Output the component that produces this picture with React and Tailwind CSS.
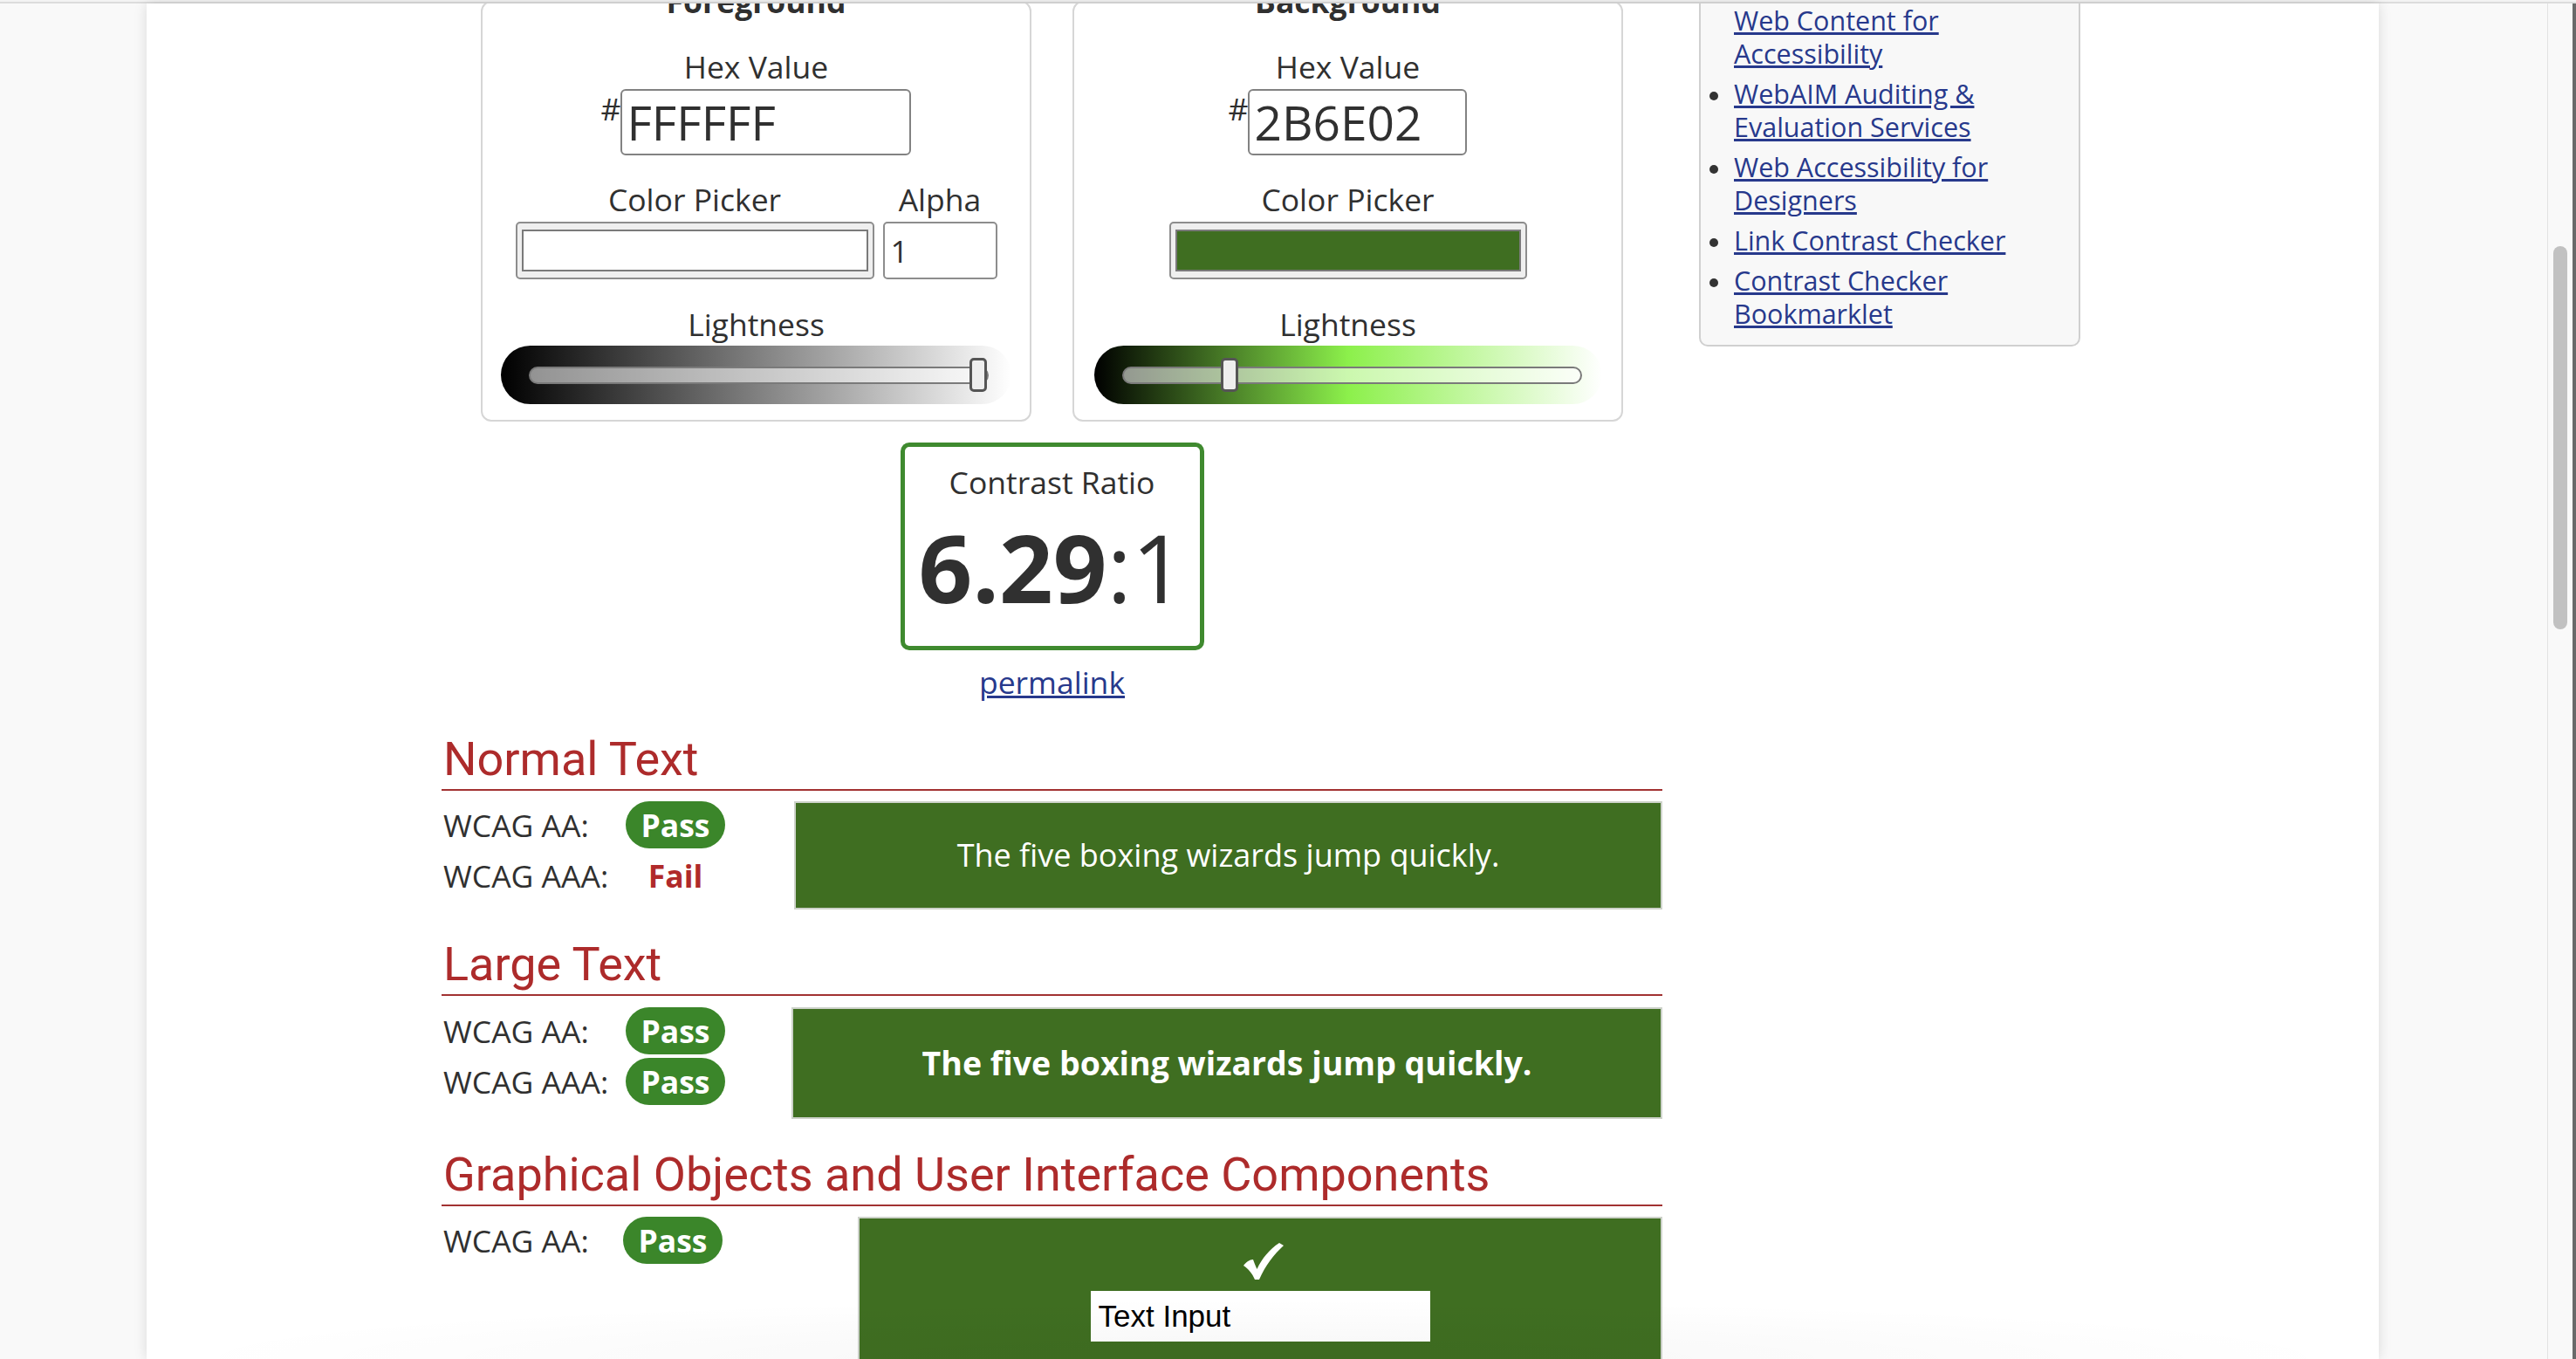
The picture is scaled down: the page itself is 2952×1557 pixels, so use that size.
import React from "react";

function Slider({ barClass, thumbLeft }) {
  return (
    <div className={`mt-[1px] h-[67px] rounded-full flex items-center pl-[32px] ${barClass}`}>
      <div className="relative w-[527px] h-[20px] rounded-full border-2 border-[#7a7a7a] bg-white/55">
        <div
          className="absolute top-[-12px] w-[20px] h-[39px] rounded-[5px] border-[3px] border-[#555555] bg-[#eeeeee]"
          style={{ left: thumbLeft }}
        />
      </div>
    </div>
  );
}

function Panel({ title, hex, hexBox, swatch, pickerW, alpha, barClass, thumbLeft }) {
  return (
    <div className="relative w-[631px] rounded-[12px] border-2 border-[#d6d6d6] pt-[49px] pb-[18px] flex flex-col items-center">
      <div className="absolute inset-x-0 top-[-26px] text-center font-bold leading-[48px]">{title}</div>
      <div className="leading-[48px]">Hex Value</div>
      <div className="mt-[2px] flex items-start">
        <span className="mt-[-2px] leading-[48px]">#</span>
        <div className={`${hexBox} h-[76px] rounded-[6px] border-2 border-[#828282] pl-[5px] text-[55px] leading-[72px]`}>
          {hex}
        </div>
      </div>
      <div className="mt-[26px] flex gap-[10px] items-start">
        <div className="flex flex-col items-center">
          <div className="leading-[48px]">Color Picker</div>
          <div className={`mt-[2px] ${pickerW} h-[66px] rounded-[5px] border-2 border-[#8d8d8d] bg-[#efefef] px-[5px] py-[7px]`}>
            <div className={`h-full border-2 border-[#7a7a7a] ${swatch}`} />
          </div>
        </div>
        {alpha && (
          <div className="flex flex-col items-center">
            <div className="leading-[48px]">Alpha</div>
            <div className="mt-[2px] w-[131px] h-[66px] rounded-[5px] border-2 border-[#8d8d8d] bg-white pl-[7px] leading-[62px]">
              1
            </div>
          </div>
        )}
      </div>
      <div className="mt-[27px] leading-[48px]">Lightness</div>
      <Slider barClass={barClass} thumbLeft={thumbLeft} />
    </div>
  );
}

function Badge() {
  return (
    <span className="block w-[114px] h-[54px] rounded-full bg-[#3b862a] text-white font-bold leading-[54px] text-center">
      Pass
    </span>
  );
}

function Heading({ children, mt }) {
  return (
    <h2
      className={`${mt} font-['Roboto',sans-serif] text-[54px] leading-[64px] font-normal text-[#ad2b2b] border-b-2 border-[#a23232] pb-[2px] pl-[2px]`}
    >
      {children}
    </h2>
  );
}

const links = [
  { t: "Web Content for Accessibility", bullet: false },
  { t: "WebAIM Auditing & Evaluation Services", bullet: true },
  { t: "Web Accessibility for Designers", bullet: true },
  { t: "Link Contrast Checker", bullet: true },
  { t: "Contrast Checker Bookmarklet", bullet: true },
];

export default function App() {
  return (
    <div className="w-[2952px] h-[1557px] overflow-hidden bg-[#f9f9f9] flex flex-col font-['Open_Sans',sans-serif] text-[35.5px] text-[#303030]">
      <div className="h-[2px] bg-[#f3f3f3]" />
      <div className="h-[2px] bg-[#dcdcdc]" />
      <div className="flex flex-1 min-h-0">
        <div className="w-[168px] bg-[#f9f9f9]" />
        <div className="relative z-10 w-[2558px] bg-white shadow-[0_0_14px_rgba(0,0,0,0.13)] overflow-hidden">
          <div className="flex pl-[338px] gap-[42px]">
            {/* main column */}
            <div className="w-[1399px] flex flex-col">
              <div className="mt-[-3px] flex justify-center gap-[47px]">
                <Panel
                  title="Foreground"
                  hex="FFFFFF"
                  hexBox="w-[333px]"
                  swatch="bg-white"
                  pickerW="w-[411px]"
                  alpha
                  barClass="w-[585px] bg-[linear-gradient(to_right,#000000,#ffffff)]"
                  thumbLeft={503}
                />
                <Panel
                  title="Background"
                  hex="2B6E02"
                  hexBox="w-[251px]"
                  swatch="bg-[#3f6e21]"
                  pickerW="w-[410px]"
                  alpha={false}
                  barClass="w-[582px] bg-[linear-gradient(to_right,#000000_0%,#8cf04b_50%,#ffffff_100%)]"
                  thumbLeft={111}
                />
              </div>

              <div className="self-center mt-[24px] w-[348px] h-[238px] rounded-[10px] border-[5px] border-[#3f8a2f] flex flex-col items-center pt-[16px]">
                <div className="leading-[48px]">Contrast Ratio</div>
                <div className="mt-[14px] text-[108px] leading-[120px]">
                  <span className="font-bold">6.29</span>
                  <span>:1</span>
                </div>
              </div>
              <a className="self-center mt-[12px] leading-[48px] text-[#27398c] underline">permalink</a>

              <Heading mt="mt-[33px]">Normal Text</Heading>
              <div className="mt-[12px] flex justify-between items-start">
                <div className="grid grid-cols-[209px_114px] gap-y-[4px] pl-[2px] leading-[54px]">
                  <div>WCAG AA:</div>
                  <Badge />
                  <div>WCAG AAA:</div>
                  <div className="text-center font-bold text-[#b02a2a]">Fail</div>
                </div>
                <div className="w-[995px] h-[124px] border-2 border-[#cdd2ca] bg-[#3f6e21] text-white text-[36px] flex items-center justify-center">
                  The five boxing wizards jump quickly.
                </div>
              </div>

              <Heading mt="mt-[31px]">Large Text</Heading>
              <div className="mt-[13px] flex justify-between items-start">
                <div className="grid grid-cols-[209px_114px] gap-y-[4px] pl-[2px] leading-[54px]">
                  <div>WCAG AA:</div>
                  <Badge />
                  <div>WCAG AAA:</div>
                  <Badge />
                </div>
                <div className="w-[998px] h-[128px] border-2 border-[#cdd2ca] bg-[#3f6e21] text-white font-bold text-[37.5px] flex items-center justify-center">
                  The five boxing wizards jump quickly.
                </div>
              </div>

              <Heading mt="mt-[32px]">Graphical Objects and User Interface Components</Heading>
              <div className="mt-[12px] flex justify-between items-start">
                <div className="grid grid-cols-[206px_114px] pl-[2px] leading-[54px]">
                  <div>WCAG AA:</div>
                  <Badge />
                </div>
                <div className="w-[922px] h-[300px] border-2 border-[#cdd2ca] bg-[#3f6e21] flex flex-col items-center pt-[28px]">
                  <svg width="46" height="42" viewBox="0 0 46 42" className="ml-[8px]">
                    <path
                      d="M0 26 C3 22 7 19 11 19 C12 22 14 27 15.5 30 C21 18 30 7 41 0 L46 3 C35 13 25 26 18 42 L13 42 C10 35 6 30 0 26 Z"
                      fill="#ffffff"
                    />
                  </svg>
                  <div className="mt-[13px] w-[389px] h-[58px] bg-white pl-[9px] font-['Liberation_Sans',Arial,sans-serif] text-[35px] leading-[58px] text-black">
                    Text Input
                  </div>
                </div>
              </div>
            </div>

            {/* sidebar */}
            <div className="w-[437px] self-start mt-[-40px] rounded-b-[10px] border-2 border-[#d0d0d0] bg-[#f8f8f8] pt-[38px] pb-[17px] pl-[10px]">
              <ul className="flex flex-col gap-[8px] text-[30.5px] leading-[38px]">
                {links.map((l) => (
                  <li key={l.t} className="flex">
                    <span className="w-[10px] shrink-0 pt-[17px]">
                      {l.bullet && <span className="block w-[10px] h-[10px] rounded-full bg-[#333333]" />}
                    </span>
                    <a className="ml-[18px] w-[360px] text-[#27398c] underline">{l.t}</a>
                  </li>
                ))}
              </ul>
            </div>
          </div>
          <div className="absolute inset-x-0 bottom-0 h-[70px] bg-[radial-gradient(ellipse_at_bottom,rgba(0,0,0,0.035),rgba(0,0,0,0)_70%)]" />
        </div>
        <div className="w-[193px] bg-[#f9f9f9]" />
        <div className="w-[1px] bg-[#e2e2e2]" />
        <div className="w-[28px] bg-[#f9f9f9] pt-[278px] px-[6px]">
          <div className="h-[439px] rounded-full bg-[#c1c1c1]" />
        </div>
        <div className="w-[4px] bg-[#6a6a6a]" />
      </div>
    </div>
  );
}
